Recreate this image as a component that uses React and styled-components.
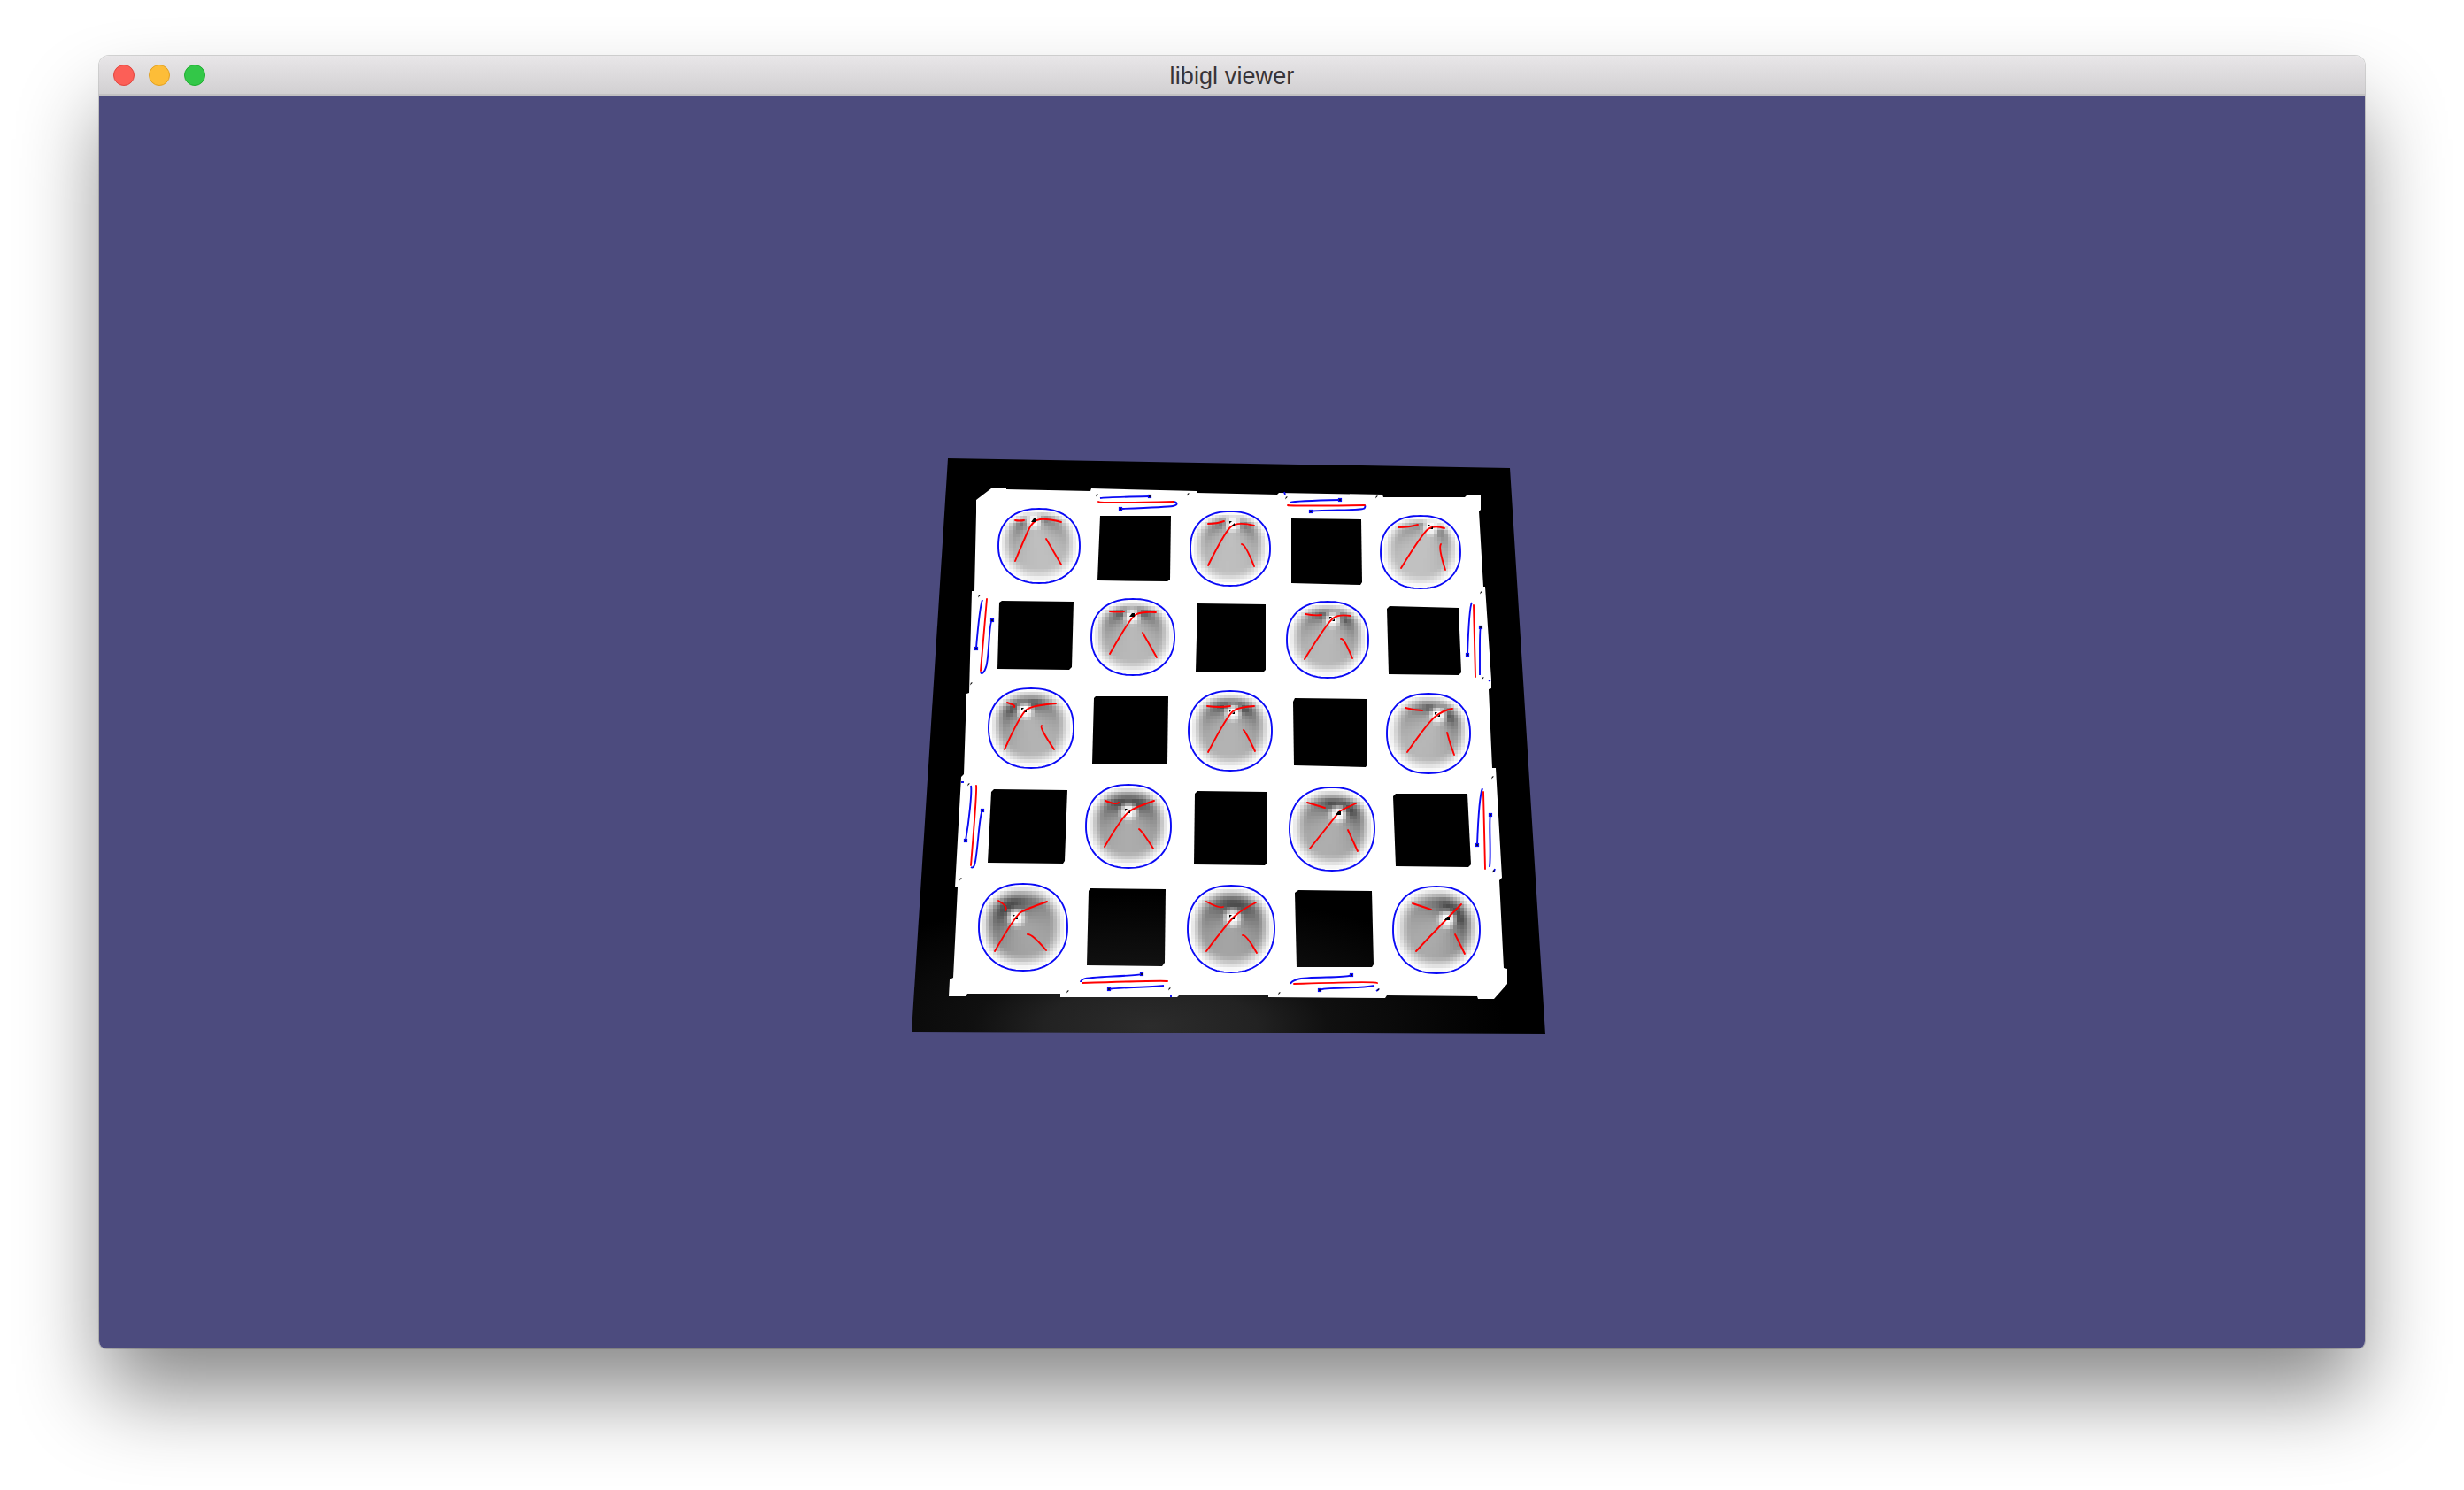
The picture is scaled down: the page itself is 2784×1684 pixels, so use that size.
import React from "react";
import styled, { createGlobalStyle } from "styled-components";

const GlobalStyle = createGlobalStyle`
  html, body {
    margin: 0;
    background: #fff;
    overflow: hidden;
  }
`;

const Page = styled.div`
  height: 1684px;
  box-sizing: border-box;
  padding: 63px 112px 160px;
  background: #fff;
`;
const Window = styled.div`
  height: 1461px;
  display: flex;
  flex-direction: column;
  border-radius: 11px 11px 8px 8px;
  overflow: hidden;
  box-shadow: 0 0 0 1px rgba(0, 0, 0, 0.16), 0 56px 96px -6px rgba(0, 0, 0, 0.47);
`;
const TitleBar = styled.div`
  height: 45px;
  flex: none;
  box-sizing: border-box;
  display: grid;
  grid-template-columns: 1fr auto 1fr;
  align-items: center;
  padding: 2px 16px 0;
  background: linear-gradient(#e8e6e8, #d2d0d2);
  border-bottom: 2px solid #c2c1c2;
`;
const Lights = styled.div`
  display: flex;
  gap: 16px;
  margin-top: -2px;
`;
const Light = styled.span`
  width: 24px;
  height: 24px;
  box-sizing: border-box;
  border-radius: 50%;
  background: ${(p) => p.color};
  border: 1px solid ${(p) => p.edge};
`;
const Title = styled.div`
  font-family: "Liberation Sans", Arial, sans-serif;
  font-size: 27px;
  line-height: 32px;
  letter-spacing: 0.1px;
  color: #383438;
`;
const Viewport = styled.div`
  flex: 1;
  min-height: 0;
  background: #4c4b7e;
`;
const Scene = styled.svg`
  display: block;
  width: 100%;
  height: 100%;
`;
const BlueLine = styled.path`
  fill: none;
  stroke: #0a0af5;
  stroke-width: 1.9px;
  stroke-linejoin: round;
`;
const RedLine = styled.path`
  fill: none;
  stroke: #ff0000;
  stroke-width: 1.9px;
  stroke-linecap: round;
  stroke-linejoin: round;
`;
const Pin = styled.rect`
  fill: #111;
  stroke: #0a0af5;
  stroke-width: 1.2px;
`;
const Speck = styled.path`
  fill: #000;
`;
const Cell = styled.rect`
  shape-rendering: crispEdges;
`;

const OUTLINE = [
  [1103, 579], [1103, 565], [1120, 552], [1137, 551], [1137, 553], [1232, 555], [1233, 552], [1352, 555],
  [1352, 557], [1443, 559], [1445, 557], [1562, 559], [1563, 562], [1655, 562], [1657, 560], [1673, 560],
  [1673, 576], [1671, 578], [1676, 663], [1678, 663], [1685, 768], [1685, 778], [1682, 779], [1686, 868],
  [1690, 868], [1697, 992], [1694, 995], [1699, 1094], [1703, 1095], [1703, 1112], [1688, 1129], [1670, 1129],
  [1669, 1126], [1567, 1125], [1565, 1128], [1433, 1127], [1433, 1124], [1333, 1124], [1330, 1127], [1198, 1127],
  [1198, 1123], [1093, 1123], [1091, 1126], [1072, 1126], [1073, 1107], [1077, 1105], [1082, 1003], [1079, 1003],
  [1086, 878], [1089, 875], [1092, 784], [1095, 783], [1098, 668], [1101, 668],
];

const HOLES = [
  [[1243, 583], [1323, 583], [1322, 655], [1319, 657], [1240, 656]],
  [[1459, 586], [1538, 587], [1539, 658], [1537, 661], [1459, 659]],
  [[1132, 679], [1213, 680], [1211, 754], [1208, 757], [1127, 756], [1129, 681]],
  [[1353, 682], [1430, 683], [1430, 757], [1427, 760], [1351, 759]],
  [[1570, 685], [1648, 687], [1651, 760], [1648, 763], [1569, 762], [1567, 688]],
  [[1238, 787], [1320, 787], [1319, 862], [1317, 864], [1234, 863], [1236, 789]],
  [[1463, 789], [1544, 790], [1545, 864], [1543, 867], [1462, 865], [1461, 793]],
  [[1123, 892], [1206, 893], [1203, 973], [1201, 976], [1116, 975], [1120, 895]],
  [[1353, 894], [1431, 895], [1432, 975], [1429, 978], [1349, 977], [1350, 897]],
  [[1577, 897], [1658, 897], [1662, 977], [1659, 980], [1577, 979], [1574, 900]],
  [[1232, 1004], [1317, 1005], [1316, 1088], [1313, 1092], [1228, 1091], [1230, 1007]],
  [[1467, 1006], [1550, 1007], [1552, 1090], [1550, 1093], [1465, 1093], [1463, 1009]],
];

// c: centre, r: radii, peak: top of the bump, red: the cut lines drawn on it
const DOMES = [
  { c: [1174, 617], r: [46, 42], peak: [1168, 589], split: false, red: [
    [[1147, 588], [1152, 589], [1157, 588]],
    [[1199, 590], [1183, 586], [1167, 588], [1157, 610], [1147, 634]],
    [[1182, 609], [1199, 638]],
  ] },
  { c: [1390, 620], r: [45, 42], peak: [1393, 592], split: true, red: [
    [[1365, 592], [1375, 592], [1383, 589]],
    [[1417, 594], [1397, 589], [1383, 603], [1365, 639]],
    [[1403, 615], [1407, 615], [1417, 640]],
  ] },
  { c: [1605, 624], r: [45, 41], peak: [1617, 596], split: true, red: [
    [[1580, 596], [1592, 596], [1602, 593]],
    [[1632, 597], [1620, 593], [1607, 603], [1583, 642]],
    [[1628, 615], [1625, 619], [1633, 644]],
  ] },
  { c: [1280, 720], r: [47, 43], peak: [1279, 696], split: false, red: [
    [[1254, 691], [1262, 692], [1270, 691]],
    [[1306, 692], [1290, 691], [1277, 698], [1254, 739]],
    [[1291, 715], [1307, 743]],
  ] },
  { c: [1500, 723], r: [46, 43], peak: [1506, 700], split: true, red: [
    [[1475, 694], [1485, 696], [1493, 695]],
    [[1526, 696], [1513, 694], [1500, 703], [1474, 745]],
    [[1515, 722], [1518, 720], [1528, 744]],
  ] },
  { c: [1165, 823], r: [48, 45], peak: [1158, 803], split: true, red: [
    [[1138, 794], [1148, 797], [1146, 799]],
    [[1193, 795], [1167, 797], [1153, 807], [1135, 847]],
    [[1177, 820], [1174, 822], [1191, 847]],
  ] },
  { c: [1390, 826], r: [47, 45], peak: [1393, 805], split: true, red: [
    [[1364, 798], [1378, 800], [1390, 798]],
    [[1417, 798], [1400, 799], [1387, 808], [1365, 850]],
    [[1405, 825], [1408, 828], [1418, 849]],
  ] },
  { c: [1614, 829], r: [47, 45], peak: [1625, 808], split: true, red: [
    [[1588, 800], [1598, 803], [1607, 803]],
    [[1641, 801], [1630, 803], [1613, 817], [1590, 850]],
    [[1635, 828], [1638, 840], [1643, 853]],
  ] },
  { c: [1275, 934], r: [48, 47], peak: [1275, 917], split: true, red: [
    [[1249, 905], [1261, 910], [1264, 907]],
    [[1304, 905], [1283, 912], [1268, 923], [1248, 957]],
    [[1287, 937], [1291, 940], [1303, 959]],
  ] },
  { c: [1505, 937], r: [48, 47], peak: [1512, 920], split: false, red: [
    [[1477, 907], [1497, 913]],
    [[1532, 908], [1514, 916], [1512, 919], [1480, 959]],
    [[1523, 938], [1534, 962]],
  ] },
  { c: [1156, 1048], r: [50, 49], peak: [1148, 1037], split: true, red: [
    [[1128, 1018], [1139, 1024], [1136, 1029]],
    [[1183, 1019], [1160, 1027], [1147, 1035], [1124, 1075]],
    [[1161, 1056], [1166, 1055], [1182, 1074]],
  ] },
  { c: [1391, 1050], r: [49, 49], peak: [1393, 1037], split: true, red: [
    [[1363, 1019], [1378, 1027], [1382, 1025]],
    [[1419, 1020], [1403, 1028], [1387, 1043], [1363, 1075]],
    [[1404, 1057], [1408, 1056], [1420, 1077]],
  ] },
  { c: [1623, 1051], r: [49, 49], peak: [1635, 1039], split: false, red: [
    [[1596, 1021], [1617, 1028]],
    [[1651, 1022], [1632, 1041], [1600, 1075]],
    [[1644, 1056], [1655, 1078]],
  ] },
];

// the little bridges between the outer frame and the grid
const TABS = [
  { a: [[1243, 563], [1250, 562], [1299, 561]], b: [[1267, 575], [1320, 573], [1330, 571], [1329, 567], [1325, 567]],
    red: [[1241, 567], [1244, 569], [1326, 567]], pins: [[1299, 561], [1266, 575]], specks: [[1239, 560], [1342, 559]] },
  { a: [[1458, 568], [1463, 566], [1514, 565]], b: [[1481, 578], [1483, 577], [1540, 576], [1543, 573], [1542, 571]],
    red: [[1455, 571], [1458, 572], [1542, 571]], pins: [[1514, 565], [1481, 578]], specks: [[1453, 563], [1555, 562]],
    stub: [[1451, 556], [1452, 559]] },
  { a: [[1110, 678], [1107, 685], [1103, 732]], b: [[1121, 701], [1119, 702], [1116, 747], [1113, 758], [1109, 762], [1108, 760]],
    red: [[1115, 677], [1108, 758]], pins: [[1103, 733], [1121, 701]], specks: [[1106, 674], [1097, 773]] },
  { a: [[1663, 681], [1660, 685], [1658, 740]], b: [[1673, 709], [1672, 710], [1672, 757], [1672, 763]],
    red: [[1665, 684], [1667, 765]], pins: [[1658, 740], [1673, 709]], specks: [[1673, 670], [1675, 767]],
    stub: [[1682, 769], [1684, 770]] },
  { a: [[1097, 888], [1098, 893], [1094, 933], [1091, 950]], b: [[1110, 916], [1108, 918], [1103, 970], [1100, 982], [1097, 980]],
    red: [[1103, 888], [1104, 893], [1097, 978]], pins: [[1091, 950], [1110, 916]], specks: [[1094, 887], [1085, 994]],
    stub: [[1086, 884], [1089, 884]] },
  { a: [[1675, 891], [1671, 900], [1669, 955]], b: [[1684, 921], [1683, 923], [1684, 973], [1683, 980]],
    red: [[1676, 895], [1678, 982]], pins: [[1669, 955], [1684, 921]], specks: [[1686, 879], [1687, 985]],
    stub: [[1689, 982], [1688, 985]] },
  { a: [[1290, 1101], [1288, 1102], [1228, 1105], [1221, 1108], [1221, 1110]], b: [[1253, 1118], [1255, 1117], [1307, 1115], [1315, 1114]],
    red: [[1223, 1111], [1315, 1108], [1319, 1109]], pins: [[1290, 1101], [1253, 1118]], specks: [[1206, 1121], [1321, 1118]],
    stub: [[1323, 1125], [1323, 1127]] },
  { a: [[1527, 1102], [1525, 1104], [1472, 1105], [1459, 1109], [1458, 1112]], b: [[1491, 1119], [1493, 1117], [1543, 1116], [1553, 1114]],
    red: [[1462, 1112], [1552, 1109], [1556, 1111]], pins: [[1527, 1102], [1491, 1119]], specks: [[1445, 1123], [1557, 1119]],
    stub: [[1555, 1120], [1558, 1118]] },
];

const poly = (pts) => pts.map((p) => p.join(",")).join(" ");

// line through the points, rounding the inner corners
const smooth = (pts) => {
  if (pts.length < 3) return `M${pts.map((p) => p.join(" ")).join("L")}`;
  let d = `M${pts[0][0]} ${pts[0][1]}`;
  for (let i = 1; i < pts.length - 1; i++) {
    const mx = (pts[i][0] + pts[i + 1][0]) / 2;
    const my = (pts[i][1] + pts[i + 1][1]) / 2;
    const end = i === pts.length - 2 ? pts[i + 1] : [mx, my];
    d += `Q${pts[i][0]} ${pts[i][1]} ${end[0]} ${end[1]}`;
  }
  return d;
};

const POWER = 2.3;
const superR = (u, v) => Math.pow(Math.pow(Math.abs(u), POWER) + Math.pow(Math.abs(v), POWER), 1 / POWER);

const bottomTaper = (v) => 1 - 0.06 * Math.max(v, 0) * Math.max(v, 0);

const domePath = ({ c, r }) => {
  const pts = [];
  for (let i = 0; i < 72; i++) {
    const t = (i / 72) * Math.PI * 2;
    const ct = Math.cos(t);
    const st = Math.sin(t);
    const k = superR(ct, st);
    const u = ct / k;
    const v = st / k;
    pts.push(`${(c[0] + u * r[0] * bottomTaper(v)).toFixed(1)} ${(c[1] + v * r[1]).toFixed(1)}`);
  }
  return `M${pts.join("L")}Z`;
};

const smoothstep = (a, b, x) => {
  const t = Math.min(1, Math.max(0, (x - a) / (b - a)));
  return t * t * (3 - 2 * t);
};

// grey of the dome at a point: steeper towards the near rim, white at rim and peak
const shade = (dome, x, y) => {
  const { c, r, peak } = dome;
  const u = (x - c[0]) / r[0];
  const v = (y - c[1]) / r[1];
  const rim = superR(u / bottomTaper(v), v);
  if (rim > 0.99) return null;
  const pu = (peak[0] - c[0]) / r[0];
  const pv = (peak[1] - c[1]) / r[1];
  const du = u - pu;
  const dv = v - pv;
  const d = Math.hypot(du, dv) || 0.001;
  const dirU = du / d;
  const dirV = dv / d;
  const b = pu * dirU + pv * dirV;
  const ray = -b + Math.sqrt(Math.max(0, b * b - (pu * pu + pv * pv - 1)));
  const dark = Math.min(0.7, 0.48 / Math.pow(Math.max(ray, 0.05), 1.25));
  const amount = dark * smoothstep(0, 0.42, 1 - rim) * smoothstep(0.05, 0.3, d);
  const g = Math.round(255 * (1 - amount));
  return `rgb(${g},${g},${g})`;
};

const CELL = 4;

const domeCells = (dome) => {
  const cells = [];
  const { c, r } = dome;
  for (let y = c[1] - r[1]; y < c[1] + r[1]; y += CELL) {
    for (let x = c[0] - r[0]; x < c[0] + r[0]; x += CELL) {
      const fill = shade(dome, x + CELL / 2, y + CELL / 2);
      if (fill && fill !== "rgb(255,255,255)") cells.push({ x, y, fill });
    }
  }
  return cells;
};

const Dome = ({ dome }) => {
  const [px, py] = dome.peak;
  return (
    <g>
      {domeCells(dome).map((cell) => (
        <Cell key={`${cell.x}-${cell.y}`} x={cell.x} y={cell.y} width={CELL} height={CELL} fill={cell.fill} />
      ))}
      {dome.red.map((line, i) => (
        <RedLine key={i} d={smooth(line)} />
      ))}
      {dome.split ? (
        <>
          <Speck d={`M${px - 4} ${py - 3}h3l-3 3z`} />
          <Speck d={`M${px + 2} ${py + 2}h-3l3 -3z`} />
        </>
      ) : (
        <Speck d={`M${px - 3} ${py + 1}l3 -4h3v4z`} />
      )}
      <BlueLine d={domePath(dome)} />
    </g>
  );
};

const Tab = ({ tab }) => (
  <g>
    <BlueLine d={smooth(tab.a)} />
    <BlueLine d={smooth(tab.b)} />
    <RedLine d={smooth(tab.red)} />
    {tab.stub && <BlueLine d={smooth(tab.stub)} />}
    {tab.pins.map(([x, y], i) => (
      <Pin key={i} x={x - 1.5} y={y - 1.5} width={3} height={3} />
    ))}
    {tab.specks.map(([x, y], i) => (
      <Speck key={i} d={`M${x - 1} ${y + 1.5}l1 -3h2z`} />
    ))}
  </g>
);

const Board = () => (
  <Scene viewBox="112 108 2560 1416" preserveAspectRatio="none">
    <defs>
      <radialGradient
        id="floorGlow"
        gradientUnits="userSpaceOnUse"
        cx="1300"
        cy="1160"
        r="400"
        gradientTransform="translate(1300 1160) scale(1 0.375) translate(-1300 -1160)"
      >
        <stop offset="0" stopColor="#2c2c2c" />
        <stop offset="0.3" stopColor="#222" />
        <stop offset="0.5" stopColor="#101010" />
        <stop offset="0.7" stopColor="#0a0a0a" />
        <stop offset="1" stopColor="#000" />
      </radialGradient>
    </defs>
    <polygon points="1071,518 1706,529 1746,1169 1030,1166" fill="url(#floorGlow)" />
    <polygon points={poly(OUTLINE)} fill="#fff" />
    {HOLES.map((hole, i) => (
      <polygon key={i} points={poly(hole)} fill="url(#floorGlow)" />
    ))}
    {DOMES.map((dome, i) => (
      <Dome key={i} dome={dome} />
    ))}
    {TABS.map((tab, i) => (
      <Tab key={i} tab={tab} />
    ))}
  </Scene>
);

export default function App() {
  return (
    <>
      <GlobalStyle />
      <Page>
        <Window>
          <TitleBar>
            <Lights>
              <Light color="#fc5f57" edge="#e0463f" />
              <Light color="#fdbd38" edge="#e0a024" />
              <Light color="#33c748" edge="#1fae30" />
            </Lights>
            <Title>libigl viewer</Title>
            <span />
          </TitleBar>
          <Viewport>
            <Board />
          </Viewport>
        </Window>
      </Page>
    </>
  );
}
